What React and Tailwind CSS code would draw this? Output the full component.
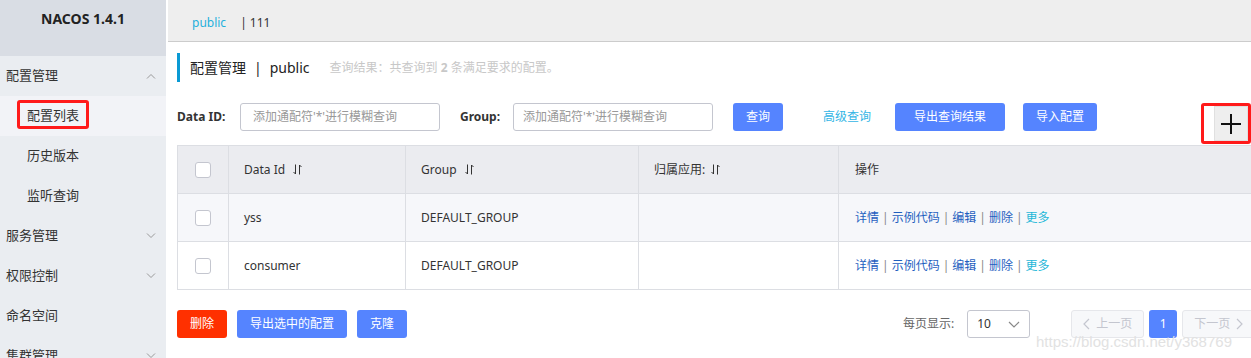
import React from "react";

const F = { fontFamily: '"Noto Sans", "Noto Sans CJK SC", sans-serif' };

function ChevronUp() {
  return (
    <svg width="10" height="6" viewBox="0 0 10 6" fill="none" stroke="#999" strokeWidth="1">
      <path d="M1 5.5 L5 1.5 L9 5.5" />
    </svg>
  );
}
function ChevronDown() {
  return (
    <svg width="10" height="6" viewBox="0 0 10 6" fill="none" stroke="#999" strokeWidth="1">
      <path d="M1 0.5 L5 4.5 L9 0.5" />
    </svg>
  );
}
function SortIcon() {
  return (
    <svg width="9" height="11" viewBox="0 0 9 11" fill="none" stroke="#333" strokeWidth="1">
      <path d="M2.5 0.5 V10 M0.5 8 L2.5 10" />
      <path d="M6.5 10.5 V1 M6.5 1 L8.5 3" />
    </svg>
  );
}

function Checkbox() {
  return <div className="w-4 h-4 rounded-[3px] border border-[#c4c6cf] bg-white" />;
}

function SideItem({ label, sub, chevron, active }) {
  return (
    <div
      className={`h-10 shrink-0 flex items-center justify-between ${sub ? "pl-[27px]" : "pl-[6px]"} pr-[10px] text-[13px] text-[#333] ${active ? "bg-[#f2f3f7]" : ""}`}
    >
      <span className="relative">
        {label}
        {active && (
          <span className="absolute -left-[10px] -top-[6px] w-[72px] h-[29px] border-[3px] border-[#ff1a1a] rounded-[3px]" />
        )}
      </span>
      {chevron === "up" && <ChevronUp />}
      {chevron === "down" && <ChevronDown />}
    </div>
  );
}

function Ops() {
  const sep = <span className="text-[#888] mx-[3px]">|</span>;
  return (
    <div className="flex items-center text-[12px] text-[#1f5fbf] whitespace-nowrap">
      <span>详情</span>
      {sep}
      <span>示例代码</span>
      {sep}
      <span>编辑</span>
      {sep}
      <span>删除</span>
      {sep}
      <span className="text-[#1fb7d8]">更多</span>
    </div>
  );
}

function Row({ id, bg }) {
  return (
    <div className={`flex h-12 border-b border-[#dcdee3] ${bg}`}>
      <div className="w-[51px] flex items-center justify-center border-r border-[#dcdee3] shrink-0">
        <Checkbox />
      </div>
      <div className="w-[177px] flex items-center pl-[15px] border-r border-[#dcdee3] shrink-0">{id}</div>
      <div className="w-[233px] flex items-center pl-[15px] border-r border-[#dcdee3] shrink-0">DEFAULT_GROUP</div>
      <div className="w-[200px] border-r border-[#dcdee3] shrink-0" />
      <div className="flex-1 flex items-center pl-[16px]">
        <Ops />
      </div>
    </div>
  );
}

const btn = "h-[28px] shrink-0 rounded-[3px] bg-[#5584ff] text-white text-[12px] flex items-center justify-center whitespace-nowrap";

export default function App() {
  return (
    <div className="w-[1251px] h-[358px] overflow-hidden flex bg-white relative" style={F}>
      {/* Sidebar */}
      <div className="w-[166px] shrink-0 bg-[#eaedf1] flex flex-col">
        <div className="h-[56px] bg-[#d9dde4] flex justify-center pt-[8px] shrink-0">
          <span className="text-[14px] font-bold text-[#222]">NACOS 1.4.1</span>
        </div>
        <SideItem label="配置管理" chevron="up" />
        <SideItem label="配置列表" sub active />
        <SideItem label="历史版本" sub />
        <SideItem label="监听查询" sub />
        <SideItem label="服务管理" chevron="down" />
        <SideItem label="权限控制" chevron="down" />
        <SideItem label="命名空间" />
        <SideItem label="集群管理" chevron="down" />
      </div>

      {/* Main */}
      <div className="flex-1 flex flex-col min-w-0">
        <div className="h-[42px] ml-[2px] bg-[#eeeeee] border-b border-[#cccccc] flex items-center pt-[5px] pl-[24px] text-[12px] shrink-0">
          <span className="text-[#1fb0dc]">public</span>
          <span className="text-[#333] ml-[14px]">| 111</span>
        </div>

        <div className="pl-[11px] flex flex-col">
          {/* Title */}
          <div className="mt-[11px] h-[29px] flex items-center border-l-[3px] border-[#0a9ad4] pl-[10px] whitespace-nowrap">
            <span className="text-[14px] text-[#222]">配置管理</span>
            <span className="text-[14px] text-[#222] mx-[8px]">|</span>
            <span className="text-[14px] text-[#222]">public</span>
            <span className="text-[12px] text-[#c8c8c8] ml-[20px]">
              查询结果：共查询到 <b className="font-bold">2</b> 条满足要求的配置。
            </span>
          </div>

          {/* Search row */}
          <div className="flex items-start mt-[21px] whitespace-nowrap">
            <span className="text-[12px] font-bold text-[#333] w-[63px] h-[28px] flex items-center shrink-0">Data ID:</span>
            <div className="w-[200px] h-[28px] shrink-0 border border-[#c4c6cf] rounded-[3px] flex items-center pl-[12px] text-[12px] text-[#999]">
              添加通配符'*'进行模糊查询
            </div>
            <span className="text-[12px] font-bold text-[#333] ml-[20px] w-[53px] h-[28px] flex items-center shrink-0">Group:</span>
            <div className="w-[200px] h-[28px] shrink-0 border border-[#c4c6cf] rounded-[3px] flex items-center pl-[9px] text-[12px] text-[#999]">
              添加通配符'*'进行模糊查询
            </div>
            <div className={`ml-[20px] w-[50px] ${btn}`}>查询</div>
            <span className="ml-[40px] h-[28px] flex items-center text-[12px] text-[#33b5e5] shrink-0">高级查询</span>
            <div className={`ml-[24px] w-[110px] ${btn}`}>导出查询结果</div>
            <div className={`ml-[18px] w-[74px] ${btn}`}>导入配置</div>
            <div className="ml-[104px] w-[50px] h-[41px] shrink-0 border-[3px] border-[#ff1a1a] rounded-[3px] flex justify-end items-end">
              <div className="w-[34px] h-[35px] bg-[#eeeeee] border border-[#e0e0e0] flex items-center justify-center">
                <svg width="22" height="22" viewBox="0 0 22 22">
                  <path d="M11 1 V21 M1 11 H21" stroke="#111" strokeWidth="2" />
                </svg>
              </div>
            </div>
          </div>

          {/* Table */}
          <div className="mt-[1px] border-l border-t border-[#dcdee3] text-[12px] text-[#333]">
            <div className="flex h-12 bg-[#ebecf0] border-b border-[#dcdee3]">
              <div className="w-[51px] flex items-center justify-center border-r border-[#dcdee3] shrink-0">
                <Checkbox />
              </div>
              <div className="w-[177px] flex items-center pl-[15px] border-r border-[#dcdee3] shrink-0 gap-[8px]">
                Data Id <SortIcon />
              </div>
              <div className="w-[233px] flex items-center pl-[15px] border-r border-[#dcdee3] shrink-0 gap-[8px]">
                Group <SortIcon />
              </div>
              <div className="w-[200px] flex items-center pl-[15px] border-r border-[#dcdee3] shrink-0 gap-[6px]">
                归属应用: <SortIcon />
              </div>
              <div className="flex-1 flex items-center pl-[16px]">操作</div>
            </div>
            <Row id="yss" bg="bg-[#f6f7fa]" />
            <Row id="consumer" bg="bg-white" />
          </div>

          {/* Bottom */}
          <div className="flex items-center mt-[20px] h-[28px] whitespace-nowrap">
            <div className="w-[50px] h-[28px] shrink-0 rounded-[3px] bg-[#ff3000] text-white text-[12px] flex items-center justify-center">
              删除
            </div>
            <div className={`ml-[10px] w-[110px] ${btn}`}>导出选中的配置</div>
            <div className={`ml-[10px] w-[50px] ${btn}`}>克隆</div>
            <span className="ml-[496px] shrink-0 text-[12px] text-[#666]">每页显示:</span>
            <div className="ml-[13px] w-[63px] h-[28px] shrink-0 border border-[#c4c6cf] rounded-[3px] flex items-center justify-between pl-[9px] pr-[9px] text-[12px] text-[#333]">
              <span>10</span>
              <svg width="12" height="7" viewBox="0 0 12 7" fill="none" stroke="#888" strokeWidth="1.2">
                <path d="M1 1 L6 6 L11 1" />
              </svg>
            </div>
            <div className="ml-[41px] w-[73px] h-[28px] shrink-0 border border-[#e6e7eb] bg-[#f7f8fa] rounded-[3px] flex items-center justify-center gap-[6px] text-[12px] text-[#c4c6cf]">
              <svg width="7" height="12" viewBox="0 0 7 12" fill="none" stroke="#c4c6cf" strokeWidth="1.2">
                <path d="M6 1 L1 6 L6 11" />
              </svg>
              上一页
            </div>
            <div className="ml-[5px] w-[28px] h-[28px] shrink-0 rounded-[3px] bg-[#5584ff] text-white text-[12px] flex items-center justify-center">
              1
            </div>
            <div className="ml-[5px] w-[73px] h-[28px] border border-[#e6e7eb] bg-[#f7f8fa] rounded-[3px] flex items-center justify-center gap-[6px] text-[12px] text-[#c4c6cf] shrink-0">
              下一页
              <svg width="7" height="12" viewBox="0 0 7 12" fill="none" stroke="#c4c6cf" strokeWidth="1.2">
                <path d="M1 1 L6 6 L1 11" />
              </svg>
            </div>
          </div>
        </div>
      </div>

      {/* Watermark */}
      <div
        className="absolute left-[1036px] top-[331px] text-[15px] text-[#e2e2e2] whitespace-nowrap"
        style={{ fontFamily: '"Liberation Sans", sans-serif' }}
      >
        https://blog.csdn.net/y368769
      </div>
    </div>
  );
}
